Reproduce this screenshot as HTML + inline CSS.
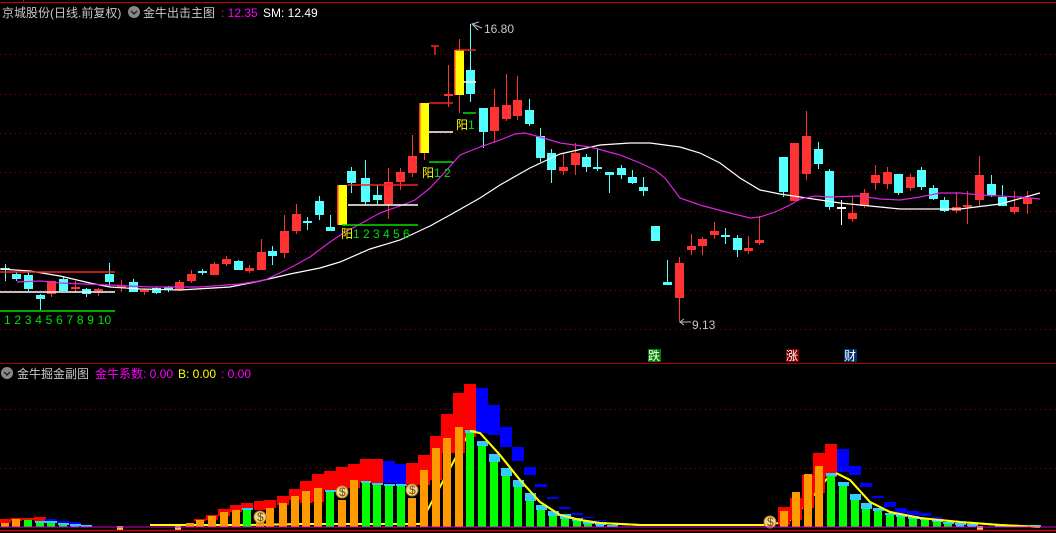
<!DOCTYPE html>
<html><head><meta charset="utf-8"><style>
html,body{margin:0;padding:0;background:#000;width:1056px;height:533px;overflow:hidden}
svg{display:block}
text{font-family:"Liberation Sans","Noto Sans CJK SC",sans-serif;font-size:12px}
</style></head><body>
<svg id="s" width="1056" height="533" xmlns="http://www.w3.org/2000/svg">
<rect width="1056" height="533" fill="#000"/>
<line x1="0" y1="2.5" x2="1056" y2="2.5" stroke="#c00000" stroke-width="1"/>
<line x1="23.5" y1="0" x2="23.5" y2="3" stroke="#c00000"/>
<g id="grid" stroke="#a00000" stroke-dasharray="1,4">
<line x1="0" y1="54.5" x2="1056" y2="54.5"/><line x1="0" y1="94.5" x2="1056" y2="94.5"/>
<line x1="0" y1="133.5" x2="1056" y2="133.5"/><line x1="0" y1="172.5" x2="1056" y2="172.5"/>
<line x1="0" y1="211.5" x2="1056" y2="211.5"/><line x1="0" y1="251.5" x2="1056" y2="251.5"/>
<line x1="0" y1="290.5" x2="1056" y2="290.5"/><line x1="0" y1="329.5" x2="1056" y2="329.5"/>
<line x1="0" y1="409.5" x2="1056" y2="409.5"/><line x1="0" y1="468.5" x2="1056" y2="468.5"/>
</g>
<line x1="0" y1="363.5" x2="1056" y2="363.5" stroke="#b00000"/>
<g id="main"></g>
<polyline id="yl" fill="none" stroke="#ffff00" stroke-width="2" points="150,525 250,525 300,524 420,524 470,431 480,433 500,455 520,480 540,502 560,515 580,520 600,523 640,525 770,525 790,520 810,500 830,475 836,473 850,480 870,502 890,512 920,518 960,522 1000,525 1040,527"/>
<g id="sub"></g>
<!-- MA lines -->
<polyline fill="none" stroke="#fff" stroke-width="1.2" points="0,269 30,271 60,276 90,283 110,287 140,289 180,290 230,287 260,281 290,274 320,268 340,262 370,249 400,240 430,226 450,215 480,198 500,185 530,168 560,154 600,145 630,143 650,143 680,147 700,153 720,163 740,178 760,190 780,194 800,197 840,203 880,207 900,209 960,209 1000,204 1040,193"/>
<polyline fill="none" stroke="#e020e0" stroke-width="1.2" points="17,282 40,281 60,283 110,285 150,287 200,287 240,284 265,280 290,268 310,257 330,242 345,232 360,224 380,213 400,206 415,200 430,188 445,172 460,155 480,147 500,140 515,134 525,133 540,137 560,143 590,147 620,155 640,163 655,170 665,178 680,198 700,205 730,213 750,218 760,217 775,212 790,205 800,199 815,196 830,197 860,196 880,199 900,200 920,197 940,193 960,193 980,195 1000,196 1020,197 1040,199"/>
<g stroke-width="1.5">
<line x1="0" y1="272" x2="115" y2="272" stroke="#ff2020"/>
<line x1="0" y1="292" x2="115" y2="292" stroke="#fff"/>
<line x1="0" y1="311" x2="115" y2="311" stroke="#00e000"/>
<line x1="348" y1="185" x2="418" y2="185" stroke="#ff2020"/>
<line x1="348" y1="205" x2="418" y2="205" stroke="#fff"/>
<line x1="342" y1="225" x2="418" y2="225" stroke="#00e000"/>
<line x1="429" y1="103" x2="453" y2="103" stroke="#ff2020"/>
<line x1="429" y1="132" x2="453" y2="132" stroke="#fff"/>
<line x1="429" y1="162" x2="453" y2="162" stroke="#00e000"/>
<line x1="456" y1="50" x2="476" y2="50" stroke="#ff2020"/>
<line x1="463" y1="82" x2="476" y2="82" stroke="#fff"/>
<line x1="463" y1="113" x2="476" y2="113" stroke="#00e000"/>
<line x1="431" y1="46" x2="439" y2="46" stroke="#ff2020"/>
<line x1="435" y1="46" x2="435" y2="55" stroke="#ff2020"/>
</g>
<text x="4" y="324" fill="#00e000" letter-spacing="0.2">1 2 3 4 5 6 7 8 9 10</text>
<text x="341" y="238" fill="#00e000"><tspan fill="#ffff00">阳</tspan>1 2 3 4 5 6</text>
<text x="422" y="177" fill="#00e000"><tspan fill="#ffff00">阳</tspan>1 2</text>
<text x="456" y="129" fill="#00e000"><tspan fill="#ffff00">阳</tspan>1</text>
<polyline points="479,22 472,24 478,30" fill="none" stroke="#bbb"/>
<line x1="472" y1="24" x2="482" y2="28" stroke="#bbb"/>
<text x="484" y="33" fill="#c8c8c8">16.80</text>
<line x1="680" y1="322" x2="691" y2="322" stroke="#bbb"/>
<polyline points="684,319 680,322 684,325" fill="none" stroke="#bbb"/>
<text x="692" y="329" fill="#c8c8c8">9.13</text>
<rect x="648" y="349" width="13" height="13" fill="#008000"/><text x="648" y="360" fill="#fff" font-size="12">跌</text>
<rect x="786" y="349" width="13" height="13" fill="#800000"/><text x="786" y="360" fill="#fff" font-size="12">涨</text>
<rect x="844" y="349" width="13" height="13" fill="#003070"/><text x="844" y="360" fill="#fff" font-size="12">财</text>
<text x="2" y="17" fill="#c8c8c8">京城股份(日线.前复权)</text>
<circle cx="134" cy="12" r="6" fill="#888"/><polyline points="131,11 134,14 137,11" fill="none" stroke="#222" stroke-width="1.5"/>
<text x="143" y="17" fill="#c8c8c8">金牛出击主图</text>
<text x="221" y="17" fill="#ff00ff">: 12.35</text>
<text x="263" y="17" fill="#fff">SM: 12.49</text>
<circle cx="7" cy="373" r="6" fill="#888"/><polyline points="4,372 7,375 10,372" fill="none" stroke="#222" stroke-width="1.5"/>
<text x="17" y="378" fill="#c8c8c8">金牛掘金副图</text>
<text x="95" y="378" fill="#ff00ff">金牛系数: 0.00</text>
<text x="178" y="378" fill="#ffff00">B: 0.00</text>
<text x="221" y="378" fill="#ff00ff">: 0.00</text>
<line x1="0" y1="527" x2="1056" y2="527" stroke="#d000d0"/>
<line x1="0" y1="530.5" x2="1056" y2="530.5" stroke="#d00000" stroke-width="1.5"/>
</svg>
<script>
var NS="http://www.w3.org/2000/svg";
function el(g,t,a){var e=document.createElementNS(NS,t);for(var k in a)e.setAttribute(k,a[k]);g.appendChild(e);return e;}
var C={r:"#ff3333",c:"#54ffff",y:"#ffff00",w:"#ffffff"};
var d=[[5,268,270,264,281,'c'],[16,274,279,272,281,'c'],[28,275,289,272,291,'c'],[40,295,299,294,310,'c'],[51,281,294,281,297,'r'],[63,279,291,277,291,'c'],[75,287,289,281,293,'r'],[86,289,294,288,297,'c'],[98,290,291,288,296,'r'],[109,274,282,263,286,'c'],
[121,286,288,280,292,'r'],[133,282,292,279,292,'c'],[144,290,292,289,295,'r'],[156,288,293,287,294,'c'],[168,288,289,286,292,'c'],[179,282,290,280,291,'r'],[191,274,281,270,283,'r'],[202,271,273,269,275,'c'],[214,264,275,262,275,'r'],[226,259,264,256,266,'r'],
[238,261,270,260,270,'c'],[249,268,271,265,273,'r'],[261,252,270,239,270,'r'],[272,251,256,246,265,'c'],[284,231,253,215,258,'r'],[296,214,231,204,234,'r'],[307,221,223,217,230,'c'],[319,201,215,196,220,'c'],[330,227,231,215,231,'c'],[342,185,225,185,225,'y'],
[351,171,183,167,193,'c'],[365,178,202,160,205,'c'],[377,195,200,185,204,'c'],[388,182,204,168,219,'r'],[400,172,182,168,190,'r'],[412,156,173,135,177,'r'],[424,103,153,103,160,'y'],[448,94,96,65,107,'r'],[459,50,95,39,113,'y'],[470,70,94,24,102,'c'],
[483,108,132,108,148,'c'],[494,107,131,89,143,'r'],[506,105,119,74,121,'r'],[517,100,116,76,120,'r'],[529,110,124,99,126,'c'],[540,136,158,128,162,'c'],[551,153,170,149,183,'c'],[563,167,171,154,175,'r'],[575,153,165,143,175,'r'],[586,157,167,154,172,'c'],
[597,167,169,148,171,'c'],[609,172,175,172,193,'c'],[621,168,175,165,179,'c'],[632,177,183,170,184,'c'],[643,187,191,177,196,'c'],[655,226,241,226,241,'c'],[667,282,285,260,285,'c'],[679,263,298,257,322,'r'],[691,246,250,234,255,'r'],[702,239,246,237,255,'r'],
[714,231,235,222,239,'r'],[725,235,237,228,244,'c'],[737,238,250,235,257,'c'],[748,248,251,236,254,'r'],[759,240,243,216,245,'r'],[783,157,192,157,197,'c'],[794,143,201,143,201,'r'],[806,136,174,111,180,'r'],[818,149,164,142,169,'c'],[829,171,207,169,210,'c'],
[841,207,209,200,225,'w'],[852,213,219,196,222,'r'],[864,193,206,189,208,'r'],[875,175,183,165,190,'r'],[887,172,184,167,189,'r'],[898,174,193,174,195,'c'],[910,177,188,174,191,'r'],[921,170,187,167,190,'c'],[933,188,199,185,200,'c'],[944,200,211,197,212,'c'],
[956,207,211,192,213,'r'],[967,205,207,191,224,'r'],[979,175,200,156,207,'r'],[991,184,195,175,197,'c'],[1002,197,206,185,206,'c'],[1014,207,212,191,214,'r'],[1027,198,204,191,214,'r']];
var m=document.getElementById("main");
d.forEach(function(c){var col=C[c[5]];
el(m,"line",{x1:c[0]+.5,x2:c[0]+.5,y1:c[3],y2:c[4],stroke:c[5]=='y'?'#ff3333':col,"stroke-width":1});
el(m,"rect",{x:c[0]-4,y:c[2]-c[1]<2?c[1]-1:c[1],width:9,height:Math.max(2,c[2]-c[1]),fill:col});
if(c[5]=='y'){el(m,"rect",{x:c[0]-5,y:c[1],width:1.5,height:c[2]-c[1],fill:'#ff3333'});}
});
var b=[[5,523,'o',0,0,519,523,0,0],[16,519,'o',0,0,518,521,0,0],[28,520,'g',0,0,518,520,0,0],[40,523,'g',521,523,517,521,0,0],[51,523,'g',521,523,0,0,519,521],[63,525,'g',523,525,0,0,521,523],[75,525,'c',524,525,0,0,522,524],[86,525,'c',525,526,0,0,0,0],
[190,523,'o',0,0,0,0,0,0],[200,520,'o',0,0,519,521,0,0],[212,516,'o',0,0,515,520,0,0],[224,512,'o',0,0,509,516,0,0],[236,510,'o',0,0,505,512,0,0],[247,510,'g',508,510,503,508,0,0],[260,512,'o',0,0,501,510,0,0],[270,508,'o',0,0,500,508,0,0],[283,503,'o',0,0,496,505,0,0],[295,496,'o',0,0,489,500,0,0],
[306,491,'o',0,0,481,503,0,0],[318,488,'o',0,0,474,502,0,0],[330,491,'g',490,492,471,490,0,0],[342,500,'o',0,0,467,490,0,0],[354,480,'o',0,0,464,488,0,0],[366,482,'g',481,483,459,482,0,0],[377,484,'g',483,485,459,483,0,0],[389,485,'g',484,486,0,0,461,483],[401,485,'g',484,486,0,0,464,484],[412,498,'o',0,0,463,485,0,0],
[424,470,'o',0,0,455,485,0,0],[436,448,'o',0,0,436,480,0,0],[447,438,'o',0,0,414,453,0,0],[459,427,'o',0,0,393,453,0,0],[470,432,'g',430,433,384,437,0,0],[482,441,'g',441,446,0,0,388,433],[494,462,'g',454,462,0,0,405,435],[506,476,'g',468,476,0,0,427,447],[518,487,'g',480,487,0,0,447,461],[530,501,'g',493,501,0,0,467,475],
[541,510,'g',505,510,0,0,484,487],[553,516,'g',511,516,0,0,497,499],[565,518,'g',514,519,0,0,507,509],[577,521,'g',518,521,0,0,513,515],[588,524,'g',521,524,0,0,517,518],[600,525,'c',523,525,0,0,520,521],[612,526,'c',525,526,0,0,0,0],
[784,511,'o',0,0,507,525,0,0],[796,492,'o',0,0,498,520,0,0],[808,474,'o',0,0,475,508,0,0],[819,466,'o',0,0,453,493,0,0],[831,475,'g',473,476,444,477,0,0],[843,485,'g',482,486,0,0,449,472],[855,500,'g',494,500,0,0,466,475],[866,509,'g',503,509,0,0,483,487],[878,511,'g',508,511,0,0,496,498],[890,515,'g',513,515,0,0,502,507],
[901,517,'g',514,517,0,0,508,513],[913,519,'g',516,519,0,0,511,515],[925,520,'g',518,520,0,0,513,516],[937,522,'g',520,522,0,0,517,519],[948,524,'g',522,524,0,0,520,521],[960,525,'c',523,525,0,0,521,522],[972,525,'c',524,526,0,0,0,0],[1000,526,'c',525,526,0,0,0,0],[1035,526,'c',525,527,0,0,0,0]];
var s=document.getElementById("sub"),BC={o:"#ff9900",g:"#00ff00",c:"#33ccff"};
b.forEach(function(r){var x=r[0];
if(r[5])el(s,"rect",{x:x-6,y:r[5],width:12,height:r[6]-r[5],fill:"#ff0000"});
if(r[7])el(s,"rect",{x:x-6,y:r[7],width:12,height:r[8]-r[7],fill:"#0000ff"});
el(s,"rect",{x:x-4,y:r[1],width:8,height:527-r[1],fill:BC[r[2]]});
if(r[3])el(s,"rect",{x:x-5,y:r[3],width:11,height:Math.max(2,r[4]-r[3]),fill:"#33ccff"});
});
// yellow line visible over bars only on descending part
el(s,"polyline",{fill:"none",stroke:"#ffff00","stroke-width":2,points:"470,431 480,433 500,455 520,480 540,502 560,515 580,520 600,523 640,525"});
el(s,"polyline",{fill:"none",stroke:"#ffff00","stroke-width":2,points:"836,473 850,480 870,502 890,512 920,518 960,522 1000,525 1040,527"});
[[260,517],[342,492],[412,490],[770,522]].forEach(function(p){
el(s,"circle",{cx:p[0],cy:p[1],r:6,fill:"#f0d890",stroke:"#b08020"});
var t=el(s,"text",{x:p[0]-3,y:p[1]+4,fill:"#7a4a00","font-size":"10"});t.textContent="$";});
[[120,527],[178,527],[980,527]].forEach(function(p){el(s,"rect",{x:p[0]-3,y:p[1]-1,width:6,height:4,fill:"#f0c060"});});
</script>
</body></html>
